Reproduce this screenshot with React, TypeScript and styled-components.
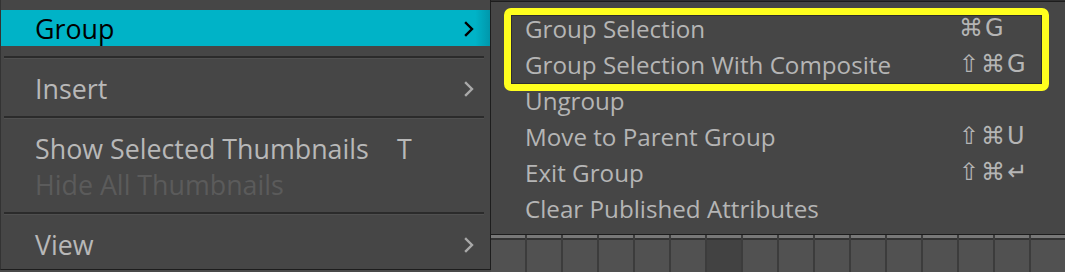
import styled, { createGlobalStyle } from "styled-components";

const GlobalStyle = createGlobalStyle`
  html, body {
    margin: 0;
    padding: 0;
    background: #4a4a4a;
  }
  body {
    font-family: "Open Sans", "DejaVu Sans", sans-serif;
  }
`;

type MenuEntry =
  | { kind: "item"; label: string; shortcut?: string; submenu?: boolean; active?: boolean; disabled?: boolean }
  | { kind: "sep" };

const mainMenu: MenuEntry[] = [
  { kind: "item", label: "Group", submenu: true, active: true },
  { kind: "sep" },
  { kind: "item", label: "Insert", submenu: true },
  { kind: "sep" },
  { kind: "item", label: "Show Selected Thumbnails", shortcut: "T" },
  { kind: "item", label: "Hide All Thumbnails", disabled: true },
  { kind: "sep" },
  { kind: "item", label: "View", submenu: true },
];

const groupMenu = [
  { label: "Group Selection", shortcut: "⌘G" },
  { label: "Group Selection With Composite", shortcut: "⇧⌘G" },
  { label: "Ungroup" },
  { label: "Move to Parent Group", shortcut: "⇧⌘U" },
  { label: "Exit Group", shortcut: "⇧⌘↵" },
  { label: "Clear Published Attributes" },
];

const Chevron = ({ color }: { color: string }) => (
  <svg width="10" height="16" viewBox="0 0 10 16">
    <path d="M2 2 L8 8 L2 14" fill="none" stroke={color} strokeWidth="2.4" strokeLinecap="square" />
  </svg>
);

const App = () => {
  return (
    <>
      <GlobalStyle />
      <Screen>
        <MainMenu>
          {mainMenu.map((entry, i) =>
            entry.kind === "sep" ? (
              <Separator key={i} />
            ) : (
              <MainItem key={i} $active={entry.active} $disabled={entry.disabled}>
                <span>{entry.label}</span>
                <span>{entry.shortcut}</span>
                {entry.submenu ? <Chevron color={entry.active ? "#000" : "#a9a9a9"} /> : <span />}
              </MainItem>
            )
          )}
        </MainMenu>

        <RightColumn>
          <TopEdge />
          <SubMenu>
            {groupMenu.map((item) => (
              <SubItem key={item.label}>
                <span>{item.label}</span>
                <Shortcut>{item.shortcut}</Shortcut>
              </SubItem>
            ))}
            <Callout />
          </SubMenu>
          <TileRow>
            {Array.from({ length: 17 }).map((_, i) => (
              <Tile key={i} $first={i === 0} $dim={i === 6}>
                <TileCap />
              </Tile>
            ))}
          </TileRow>
        </RightColumn>
      </Screen>
    </>
  );
};

const Screen = styled.div`
  width: 1065px;
  height: 272px;
  display: flex;
  align-items: flex-start;
  overflow: hidden;
`;

const MainMenu = styled.div`
  width: 491px;
  height: 270px;
  flex-shrink: 0;
  box-sizing: border-box;
  padding-top: 10px;
  background: #464646;
  border-left: 1px solid #333;
  border-right: 1px solid #1d1d1d;
  border-bottom: 1px solid #1d1d1d;
  display: flex;
  flex-direction: column;
`;

const MainItem = styled.div<{ $active?: boolean; $disabled?: boolean }>`
  height: 36px;
  display: grid;
  grid-template-columns: 362px 1fr 10px;
  align-items: center;
  padding: 0 16px 0 34px;
  font-size: 26.8px;
  color: ${(p) => (p.$active ? "#000" : p.$disabled ? "#5b5b5b" : "#b8b8b8")};
  background: ${(p) =>
    p.$active ? "linear-gradient(to right, #00b3c7 97%, #0097ab 100%)" : "transparent"};
  white-space: nowrap;

  & > svg {
    display: block;
  }
`;

const Separator = styled.div`
  height: 2px;
  margin: 10px 6px 11px 3px;
  background: #2b2b2b;
  border-bottom: 1px solid #505050;
`;

const RightColumn = styled.div`
  flex: 1;
  height: 272px;
  display: flex;
  flex-direction: column;
`;

const TopEdge = styled.div`
  height: 1px;
  background: #2f2f2f;
`;

const SubMenu = styled.div`
  position: relative;
  box-sizing: border-box;
  padding: 8px 0 8px 0;
  background: #464646;
  border-top: 1px solid #1d1d1d;
  border-bottom: 1px solid #1d1d1d;
`;

const SubItem = styled.div`
  height: 36px;
  display: grid;
  grid-template-columns: 434px auto;
  align-items: center;
  padding-left: 34px;
  font-size: 24.2px;
  color: #b5b5b5;
  white-space: nowrap;
`;

const Shortcut = styled.span`
  font-family: "DejaVu Sans", sans-serif;
  font-size: 24px;
  letter-spacing: 2px;
`;

const Callout = styled.div`
  position: absolute;
  left: 13px;
  top: 6px;
  width: 545px;
  height: 83px;
  box-sizing: border-box;
  border: 7px solid #ffff1e;
  border-radius: 7px;
  box-shadow: inset 0 0 0 1px #2e2e2e;
  pointer-events: none;
`;

const TileRow = styled.div`
  flex: 1;
  display: flex;
`;

const Tile = styled.div<{ $first?: boolean; $dim?: boolean }>`
  flex-shrink: 0;
  width: 34px;
  border-left: ${(p) => (p.$first ? "none" : "2px solid #3c3c3c")};
  background: ${(p) => (p.$dim ? "#424242" : "#515151")};
`;

const TileCap = styled.div`
  height: 3px;
  background: #787878;
  border-bottom: 2px solid #333;
`;

export default App;
